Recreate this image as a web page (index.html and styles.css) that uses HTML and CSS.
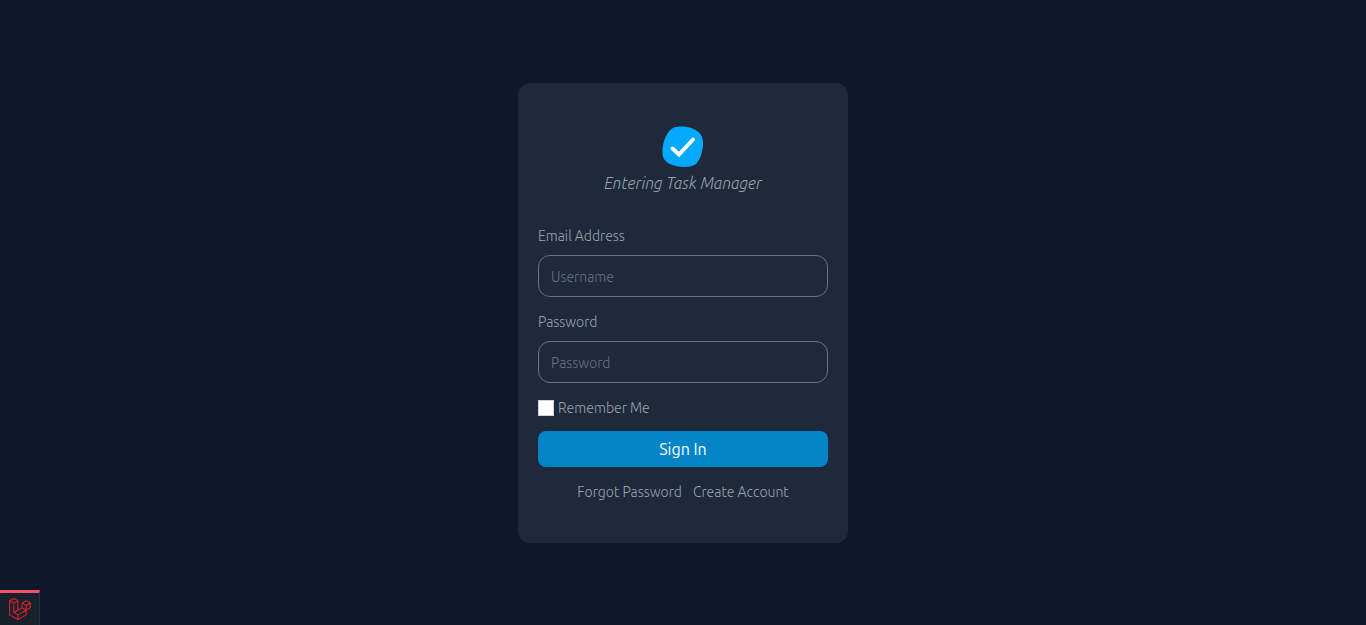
FILE: index.html
```html
<!DOCTYPE html>
<html lang="en">
<head>
<meta charset="utf-8">
<meta name="viewport" content="width=device-width, initial-scale=1">
<title>Task Manager</title>
<link rel="stylesheet" href="styles.css">
</head>
<body>
<main class="page">
  <section class="card">
    <header class="brand">
      <svg class="logo" viewBox="0 0 42 42" aria-hidden="true">
        <path fill="#03a9fc" d="M11 2C17-1 30 .5 36 5.500C40 9 41.500 13 41 19C40.500 26 38 34 34 38C29 42.500 15 41.500 8 38C2 35 0 31 .5 24C1 15 5 5 11 2Z"/>
        <path fill="none" stroke="#fff" stroke-width="4" stroke-linecap="round" stroke-linejoin="miter" d="M10.500 22.500L17 28.500L31 13.500"/>
      </svg>
      <p class="tagline">Entering Task Manager</p>
    </header>
    <form class="form">
      <div class="field">
        <label for="email">Email Address</label>
        <input class="input" id="email" type="text" placeholder="Username">
      </div>
      <div class="field">
        <label for="password">Password</label>
        <input class="input" id="password" type="password" placeholder="Password">
      </div>
      <div class="remember">
        <input class="checkbox" id="remember" type="checkbox">
        <label for="remember">Remember Me</label>
      </div>
      <button class="submit" type="submit">Sign In</button>
    </form>
    <nav class="links">
      <a href="#">Forgot Password</a>
      <a href="#">Create Account</a>
    </nav>
  </section>
</main>
<button class="debug" type="button" aria-label="Debug bar">
  <svg class="debug-icon" viewBox="0 0 24 24" aria-hidden="true">
    <path fill="none" stroke="#d6222b" stroke-width="1.200" stroke-linejoin="round" d="M.7 3L5.200 .5L9.700 3V13.300M.7 3V18.400L9.700 23.500L18.800 18.400V8.100L14.300 5.500L18.800 3L23.300 5.500V10.700L9.700 18.400V23.500M.7 3L5.200 5.600L9.700 3M5.200 5.600V15.800L9.700 18.400M5.200 15.800L14.300 10.700V5.500M14.300 10.700L18.800 13.300M18.800 8.100L23.300 5.500"/>
  </svg>
</button>
</body>
</html>
```
FILE: styles.css
```css
* {
  box-sizing: border-box;
}

body {
  margin: 0;
  background: #0f172a;
  color: #9ca3af;
  font-family: Ubuntu, "Noto Sans", sans-serif;
  font-size: 14px;
  font-weight: 300;
  line-height: 20px;
}

.page {
  display: flex;
  align-items: center;
  justify-content: center;
  min-height: 100vh;
}

.card {
  width: 100%;
  max-width: 330px;
  padding: 43px 20px 41px;
  border-radius: 12px;
  background: #1e293b;
}

.brand {
  display: flex;
  flex-direction: column;
  align-items: center;
  margin-bottom: 31px;
}

.logo {
  width: 42px;
  height: 42px;
}

.tagline {
  margin: 3px 0 0;
  font-size: 16px;
  font-style: italic;
  line-height: 24px;
}

.form {
  display: flex;
  flex-direction: column;
}

.field {
  display: flex;
  flex-direction: column;
  gap: 9px;
  margin-bottom: 15px;
}

.input {
  width: 100%;
  height: 42px;
  padding: 2px 12px 0;
  border: 1px solid #6b7280;
  border-radius: 12px;
  background: transparent;
  color: #cbd5e1;
  font: inherit;
}

.input::placeholder {
  color: #6b7280;
  opacity: 1;
}

.remember {
  display: flex;
  align-items: center;
  gap: 4px;
  margin-bottom: 13px;
}

.checkbox {
  appearance: none;
  width: 16px;
  height: 16px;
  margin: 0;
  border: 1px solid #d1d5db;
  background: #fff;
}

.checkbox:checked {
  background: #0284c7;
}

.submit {
  height: 36px;
  border: 0;
  border-radius: 8px;
  background: #0284c7;
  color: #fff;
  font: inherit;
  font-size: 16px;
  font-weight: 400;
}

.links {
  display: flex;
  justify-content: center;
  gap: 11px;
  margin-top: 15px;
}

.links a {
  color: inherit;
  text-decoration: none;
}

.debug {
  position: fixed;
  left: 0;
  bottom: 0;
  display: flex;
  align-items: center;
  justify-content: center;
  width: 40px;
  height: 35px;
  padding: 0;
  border: 0;
  border-top: 3px solid #f4516c;
  border-right: 1px solid #27323f;
  background: #18212b;
}

.debug-icon {
  width: 22px;
  height: 22px;
}
```
